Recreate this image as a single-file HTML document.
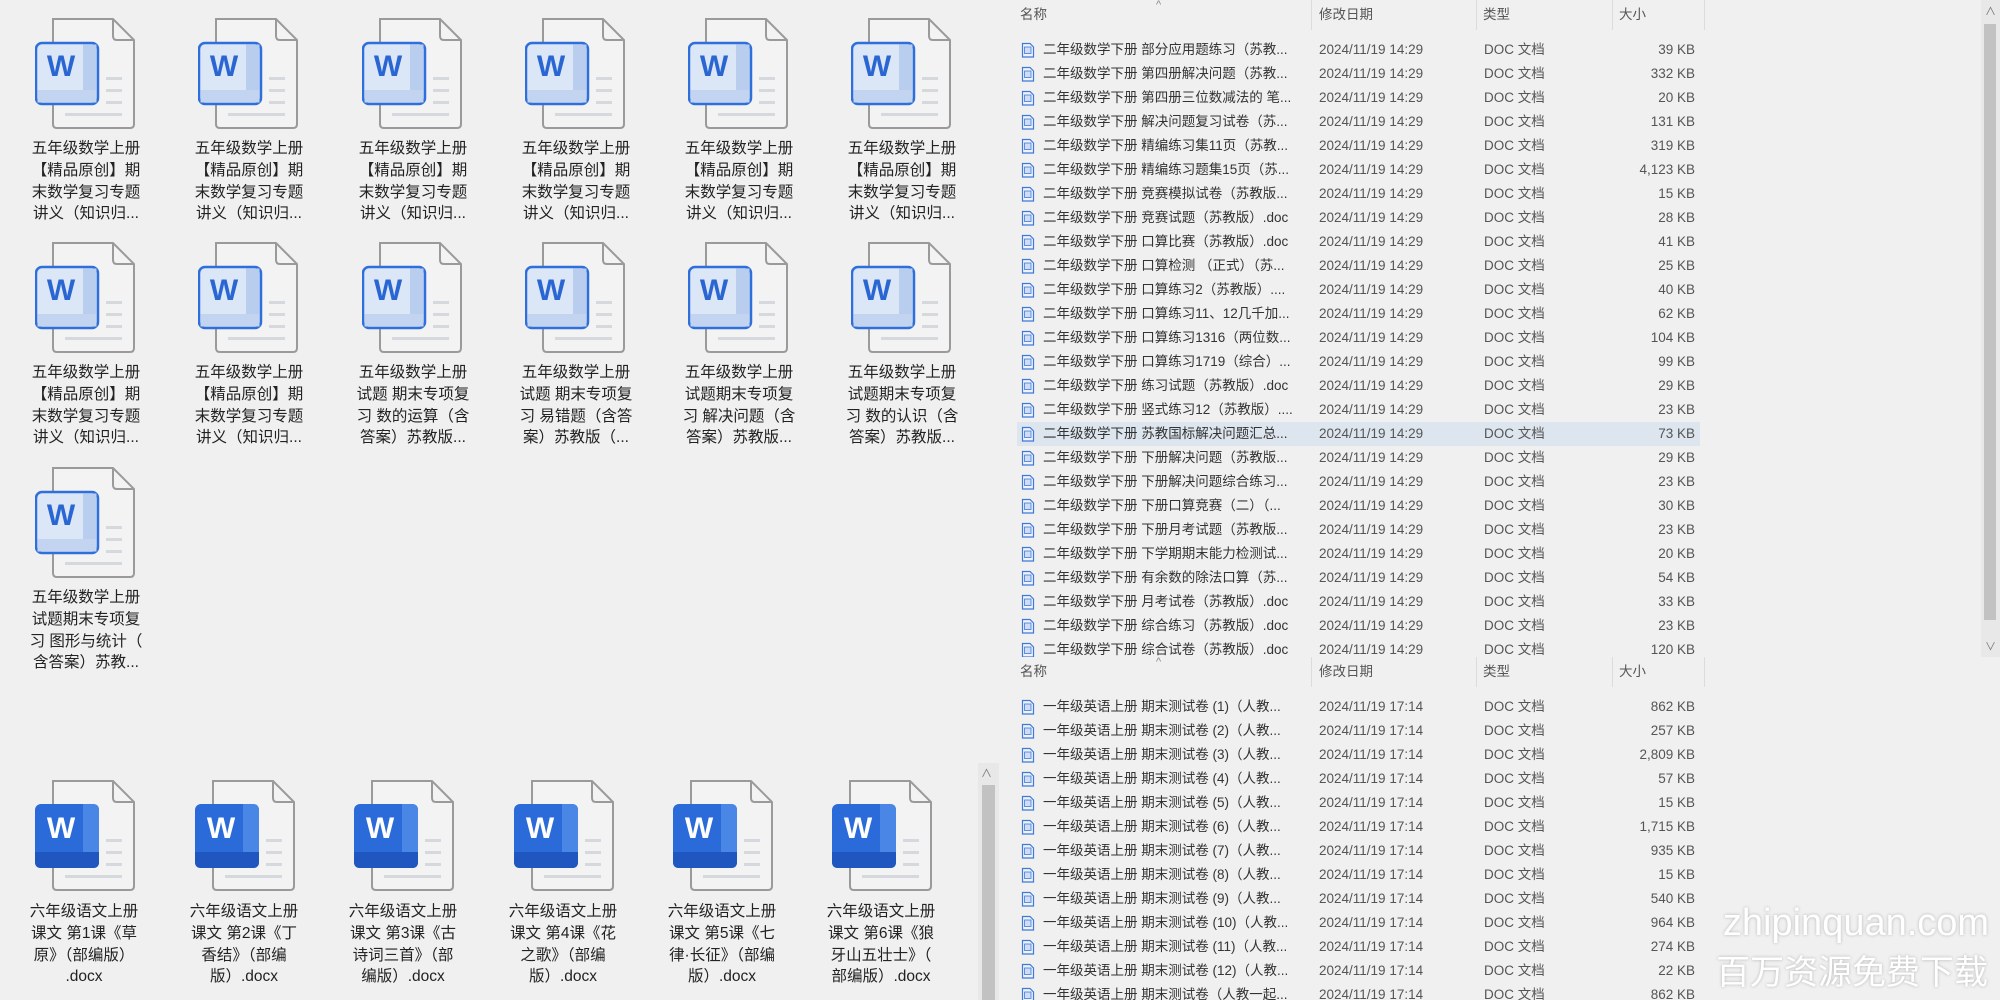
<!DOCTYPE html>
<html><head><meta charset="utf-8">
<style>
*{margin:0;padding:0;box-sizing:border-box}
body{width:2000px;height:1000px;background:#f0f0f0;position:relative;overflow:hidden;font-family:"Liberation Sans","Noto Sans CJK SC",sans-serif;color:#222}
.ic{position:absolute;width:100px;height:112px}
.lb{position:absolute;width:150px;text-align:center;font-size:15.5px;line-height:21.8px;color:#222}
.pane{position:absolute;left:1000px;width:981px;overflow:hidden}
.hd{position:absolute;top:0;height:30px;font-size:13.5px;color:#555}
.hd span{position:absolute;top:0;line-height:30px}
.sep{position:absolute;top:0;width:1px;height:30px;background:#dcdcdc}
.r{position:absolute;left:17px;width:683px;height:24px;line-height:24px;font-size:13.5px;color:#333;white-space:nowrap}
.r.sel{background:#dde5ee}
.r svg{position:absolute;left:4px;top:4px}
.r .n{position:absolute;left:26px;width:268px;overflow:hidden}
.r .d{position:absolute;left:302px;color:#555}
.r .t{position:absolute;left:467px;color:#555}
.r .s{position:absolute;right:5px;color:#555}
</style></head><body>

<svg width="0" height="0" style="position:absolute">
<defs>
<g id="pg">
<path d="M18 1 H78 L99 22 V106 Q99 110 95 110 H22 Q18 110 18 106 Z" fill="#f3f3f3" stroke="#9a9a9a" stroke-width="2"/>
<path d="M78 1 V18 Q78 22 82 22 H99" fill="none" stroke="#9a9a9a" stroke-width="2"/>
<rect x="71" y="59" width="16" height="3" fill="#d5d9de"/>
<rect x="71" y="71" width="16" height="3" fill="#d5d9de"/>
<rect x="71" y="83" width="16" height="3" fill="#d5d9de"/>
<rect x="30" y="95" width="57" height="3" fill="#d5d9de"/>
</g>
<g id="wl">
<use href="#pg"/>
<rect x="1" y="25" width="62" height="61" rx="6" fill="#dbe6f7" stroke="#2f6fdc" stroke-width="2.5"/>
<rect x="48" y="26.5" width="13.5" height="58" fill="#b9cdef"/>
<rect x="2.5" y="72" width="59" height="12.5" fill="#c3d4f0"/>
<text x="26" y="58" text-anchor="middle" font-family="Liberation Sans" font-weight="bold" font-size="30" fill="#2a66d2">W</text>
</g>
<g id="wd">
<use href="#pg"/>
<rect x="0" y="24" width="64" height="64" rx="6" fill="#2b6bd9"/>
<path d="M48 24 H58 Q64 24 64 30 V82 Q64 88 58 88 H48 Z" fill="#4a86e6"/>
<path d="M0 72 H64 V82 Q64 88 58 88 H6 Q0 88 0 82 Z" fill="#1f56bf"/>
<text x="26" y="58" text-anchor="middle" font-family="Liberation Sans" font-weight="bold" font-size="30" fill="#fff">W</text>
</g>
<g id="sm">
<path d="M1.5 1.5 H9 L12.5 5 V15 H1.5 Z" fill="#eef3fb" stroke="#3f7ad8" stroke-width="1.2"/>
<rect x="3.5" y="5" width="6.5" height="6.5" fill="#cfdcf3" stroke="#3f7ad8" stroke-width=".8"/>
</g>
</defs>
</svg>

<!-- Top-left grid -->
<svg class="ic" style="left:35px;top:18px" viewBox="0 0 100 112"><use href="#wl"/></svg>
<svg class="ic" style="left:198px;top:18px" viewBox="0 0 100 112"><use href="#wl"/></svg>
<svg class="ic" style="left:362px;top:18px" viewBox="0 0 100 112"><use href="#wl"/></svg>
<svg class="ic" style="left:525px;top:18px" viewBox="0 0 100 112"><use href="#wl"/></svg>
<svg class="ic" style="left:688px;top:18px" viewBox="0 0 100 112"><use href="#wl"/></svg>
<svg class="ic" style="left:851px;top:18px" viewBox="0 0 100 112"><use href="#wl"/></svg>

<div class="lb" style="left:11px;top:138px">五年级数学上册<br>【精品原创】期<br>末数学复习专题<br>讲义（知识归...</div>
<div class="lb" style="left:174px;top:138px">五年级数学上册<br>【精品原创】期<br>末数学复习专题<br>讲义（知识归...</div>
<div class="lb" style="left:338px;top:138px">五年级数学上册<br>【精品原创】期<br>末数学复习专题<br>讲义（知识归...</div>
<div class="lb" style="left:501px;top:138px">五年级数学上册<br>【精品原创】期<br>末数学复习专题<br>讲义（知识归...</div>
<div class="lb" style="left:664px;top:138px">五年级数学上册<br>【精品原创】期<br>末数学复习专题<br>讲义（知识归...</div>
<div class="lb" style="left:827px;top:138px">五年级数学上册<br>【精品原创】期<br>末数学复习专题<br>讲义（知识归...</div>

<svg class="ic" style="left:35px;top:242px" viewBox="0 0 100 112"><use href="#wl"/></svg>
<svg class="ic" style="left:198px;top:242px" viewBox="0 0 100 112"><use href="#wl"/></svg>
<svg class="ic" style="left:362px;top:242px" viewBox="0 0 100 112"><use href="#wl"/></svg>
<svg class="ic" style="left:525px;top:242px" viewBox="0 0 100 112"><use href="#wl"/></svg>
<svg class="ic" style="left:688px;top:242px" viewBox="0 0 100 112"><use href="#wl"/></svg>
<svg class="ic" style="left:851px;top:242px" viewBox="0 0 100 112"><use href="#wl"/></svg>

<div class="lb" style="left:11px;top:362px">五年级数学上册<br>【精品原创】期<br>末数学复习专题<br>讲义（知识归...</div>
<div class="lb" style="left:174px;top:362px">五年级数学上册<br>【精品原创】期<br>末数学复习专题<br>讲义（知识归...</div>
<div class="lb" style="left:338px;top:362px">五年级数学上册<br>试题 期末专项复<br>习 数的运算（含<br>答案）苏教版...</div>
<div class="lb" style="left:501px;top:362px">五年级数学上册<br>试题 期末专项复<br>习 易错题（含答<br>案）苏教版（...</div>
<div class="lb" style="left:664px;top:362px">五年级数学上册<br>试题期末专项复<br>习 解决问题（含<br>答案）苏教版...</div>
<div class="lb" style="left:827px;top:362px">五年级数学上册<br>试题期末专项复<br>习 数的认识（含<br>答案）苏教版...</div>

<svg class="ic" style="left:35px;top:467px" viewBox="0 0 100 112"><use href="#wl"/></svg>
<div class="lb" style="left:11px;top:587px">五年级数学上册<br>试题期末专项复<br>习 图形与统计（<br>含答案）苏教...</div>

<!-- Bottom-left row -->
<svg class="ic" style="left:35px;top:780px" viewBox="0 0 100 112"><use href="#wd"/></svg>
<svg class="ic" style="left:195px;top:780px" viewBox="0 0 100 112"><use href="#wd"/></svg>
<svg class="ic" style="left:354px;top:780px" viewBox="0 0 100 112"><use href="#wd"/></svg>
<svg class="ic" style="left:514px;top:780px" viewBox="0 0 100 112"><use href="#wd"/></svg>
<svg class="ic" style="left:673px;top:780px" viewBox="0 0 100 112"><use href="#wd"/></svg>
<svg class="ic" style="left:832px;top:780px" viewBox="0 0 100 112"><use href="#wd"/></svg>

<div class="lb" style="left:9px;top:901px">六年级语文上册<br>课文 第1课《草<br>原》（部编版）<br>.docx</div>
<div class="lb" style="left:169px;top:901px">六年级语文上册<br>课文 第2课《丁<br>香结》（部编<br>版）.docx</div>
<div class="lb" style="left:328px;top:901px">六年级语文上册<br>课文 第3课《古<br>诗词三首》（部<br>编版）.docx</div>
<div class="lb" style="left:488px;top:901px">六年级语文上册<br>课文 第4课《花<br>之歌》（部编<br>版）.docx</div>
<div class="lb" style="left:647px;top:901px">六年级语文上册<br>课文 第5课《七<br>律·长征》（部编<br>版）.docx</div>
<div class="lb" style="left:806px;top:901px">六年级语文上册<br>课文 第6课《狼<br>牙山五壮士》（<br>部编版）.docx</div>

<!-- middle scrollbar -->
<div style="position:absolute;left:978px;top:763px;width:21px;height:237px;background:#e8e8e8"></div>
<div style="position:absolute;left:982px;top:785px;width:13px;height:215px;background:#c2c2c2"></div>
<div style="position:absolute;left:981px;top:765px;font-size:11px;color:#777">∧</div>

<!-- top list pane -->
<div class="pane" style="top:0;height:657px">
<div class="hd" style="left:0;width:981px">
<span style="left:20px">名称</span><span style="left:156px;top:-10px;font-size:11px;color:#888">^</span>
<span style="left:319px">修改日期</span><span style="left:483px">类型</span><span style="left:619px">大小</span>
<div class="sep" style="left:311px"></div><div class="sep" style="left:476px"></div><div class="sep" style="left:612px"></div><div class="sep" style="left:704px"></div>
</div>
<div class="r" style="top:38px"><svg width="14" height="16"><use href="#sm"/></svg><span class="n">二年级数学下册 部分应用题练习（苏教...</span><span class="d">2024/11/19 14:29</span><span class="t">DOC 文档</span><span class="s">39 KB</span></div>
<div class="r" style="top:62px"><svg width="14" height="16"><use href="#sm"/></svg><span class="n">二年级数学下册 第四册解决问题（苏教...</span><span class="d">2024/11/19 14:29</span><span class="t">DOC 文档</span><span class="s">332 KB</span></div>
<div class="r" style="top:86px"><svg width="14" height="16"><use href="#sm"/></svg><span class="n">二年级数学下册 第四册三位数减法的 笔...</span><span class="d">2024/11/19 14:29</span><span class="t">DOC 文档</span><span class="s">20 KB</span></div>
<div class="r" style="top:110px"><svg width="14" height="16"><use href="#sm"/></svg><span class="n">二年级数学下册 解决问题复习试卷（苏...</span><span class="d">2024/11/19 14:29</span><span class="t">DOC 文档</span><span class="s">131 KB</span></div>
<div class="r" style="top:134px"><svg width="14" height="16"><use href="#sm"/></svg><span class="n">二年级数学下册 精编练习集11页（苏教...</span><span class="d">2024/11/19 14:29</span><span class="t">DOC 文档</span><span class="s">319 KB</span></div>
<div class="r" style="top:158px"><svg width="14" height="16"><use href="#sm"/></svg><span class="n">二年级数学下册 精编练习题集15页（苏...</span><span class="d">2024/11/19 14:29</span><span class="t">DOC 文档</span><span class="s">4,123 KB</span></div>
<div class="r" style="top:182px"><svg width="14" height="16"><use href="#sm"/></svg><span class="n">二年级数学下册 竞赛模拟试卷（苏教版...</span><span class="d">2024/11/19 14:29</span><span class="t">DOC 文档</span><span class="s">15 KB</span></div>
<div class="r" style="top:206px"><svg width="14" height="16"><use href="#sm"/></svg><span class="n">二年级数学下册 竞赛试题（苏教版）.doc</span><span class="d">2024/11/19 14:29</span><span class="t">DOC 文档</span><span class="s">28 KB</span></div>
<div class="r" style="top:230px"><svg width="14" height="16"><use href="#sm"/></svg><span class="n">二年级数学下册 口算比赛（苏教版）.doc</span><span class="d">2024/11/19 14:29</span><span class="t">DOC 文档</span><span class="s">41 KB</span></div>
<div class="r" style="top:254px"><svg width="14" height="16"><use href="#sm"/></svg><span class="n">二年级数学下册 口算检测 （正式）（苏...</span><span class="d">2024/11/19 14:29</span><span class="t">DOC 文档</span><span class="s">25 KB</span></div>
<div class="r" style="top:278px"><svg width="14" height="16"><use href="#sm"/></svg><span class="n">二年级数学下册 口算练习2（苏教版）....</span><span class="d">2024/11/19 14:29</span><span class="t">DOC 文档</span><span class="s">40 KB</span></div>
<div class="r" style="top:302px"><svg width="14" height="16"><use href="#sm"/></svg><span class="n">二年级数学下册 口算练习11、12几千加...</span><span class="d">2024/11/19 14:29</span><span class="t">DOC 文档</span><span class="s">62 KB</span></div>
<div class="r" style="top:326px"><svg width="14" height="16"><use href="#sm"/></svg><span class="n">二年级数学下册 口算练习1316（两位数...</span><span class="d">2024/11/19 14:29</span><span class="t">DOC 文档</span><span class="s">104 KB</span></div>
<div class="r" style="top:350px"><svg width="14" height="16"><use href="#sm"/></svg><span class="n">二年级数学下册 口算练习1719（综合）...</span><span class="d">2024/11/19 14:29</span><span class="t">DOC 文档</span><span class="s">99 KB</span></div>
<div class="r" style="top:374px"><svg width="14" height="16"><use href="#sm"/></svg><span class="n">二年级数学下册 练习试题（苏教版）.doc</span><span class="d">2024/11/19 14:29</span><span class="t">DOC 文档</span><span class="s">29 KB</span></div>
<div class="r" style="top:398px"><svg width="14" height="16"><use href="#sm"/></svg><span class="n">二年级数学下册 竖式练习12（苏教版）....</span><span class="d">2024/11/19 14:29</span><span class="t">DOC 文档</span><span class="s">23 KB</span></div>
<div class="r sel" style="top:422px"><svg width="14" height="16"><use href="#sm"/></svg><span class="n">二年级数学下册 苏教国标解决问题汇总...</span><span class="d">2024/11/19 14:29</span><span class="t">DOC 文档</span><span class="s">73 KB</span></div>
<div class="r" style="top:446px"><svg width="14" height="16"><use href="#sm"/></svg><span class="n">二年级数学下册 下册解决问题（苏教版...</span><span class="d">2024/11/19 14:29</span><span class="t">DOC 文档</span><span class="s">29 KB</span></div>
<div class="r" style="top:470px"><svg width="14" height="16"><use href="#sm"/></svg><span class="n">二年级数学下册 下册解决问题综合练习...</span><span class="d">2024/11/19 14:29</span><span class="t">DOC 文档</span><span class="s">23 KB</span></div>
<div class="r" style="top:494px"><svg width="14" height="16"><use href="#sm"/></svg><span class="n">二年级数学下册 下册口算竞赛（二）（...</span><span class="d">2024/11/19 14:29</span><span class="t">DOC 文档</span><span class="s">30 KB</span></div>
<div class="r" style="top:518px"><svg width="14" height="16"><use href="#sm"/></svg><span class="n">二年级数学下册 下册月考试题（苏教版...</span><span class="d">2024/11/19 14:29</span><span class="t">DOC 文档</span><span class="s">23 KB</span></div>
<div class="r" style="top:542px"><svg width="14" height="16"><use href="#sm"/></svg><span class="n">二年级数学下册 下学期期末能力检测试...</span><span class="d">2024/11/19 14:29</span><span class="t">DOC 文档</span><span class="s">20 KB</span></div>
<div class="r" style="top:566px"><svg width="14" height="16"><use href="#sm"/></svg><span class="n">二年级数学下册 有余数的除法口算（苏...</span><span class="d">2024/11/19 14:29</span><span class="t">DOC 文档</span><span class="s">54 KB</span></div>
<div class="r" style="top:590px"><svg width="14" height="16"><use href="#sm"/></svg><span class="n">二年级数学下册 月考试卷（苏教版）.doc</span><span class="d">2024/11/19 14:29</span><span class="t">DOC 文档</span><span class="s">33 KB</span></div>
<div class="r" style="top:614px"><svg width="14" height="16"><use href="#sm"/></svg><span class="n">二年级数学下册 综合练习（苏教版）.doc</span><span class="d">2024/11/19 14:29</span><span class="t">DOC 文档</span><span class="s">23 KB</span></div>
<div class="r" style="top:638px"><svg width="14" height="16"><use href="#sm"/></svg><span class="n">二年级数学下册 综合试卷（苏教版）.doc</span><span class="d">2024/11/19 14:29</span><span class="t">DOC 文档</span><span class="s">120 KB</span></div>
</div>

<!-- right scrollbar -->
<div style="position:absolute;left:1981px;top:0;width:19px;height:657px;background:#e8e8e8"></div>
<div style="position:absolute;left:1984px;top:24px;width:12px;height:596px;background:#c2c2c2"></div>
<div style="position:absolute;left:1985px;top:3px;font-size:11px;color:#777">∧</div>
<div style="position:absolute;left:1985px;top:638px;font-size:11px;color:#777">∨</div>

<!-- bottom list pane -->
<div class="pane" style="top:657px;height:343px">
<div class="hd" style="left:0;width:981px">
<span style="left:20px">名称</span><span style="left:156px;top:-10px;font-size:11px;color:#888">^</span>
<span style="left:319px">修改日期</span><span style="left:483px">类型</span><span style="left:619px">大小</span>
<div class="sep" style="left:311px"></div><div class="sep" style="left:476px"></div><div class="sep" style="left:612px"></div><div class="sep" style="left:704px"></div>
</div>
<div class="r" style="top:38px"><svg width="14" height="16"><use href="#sm"/></svg><span class="n">一年级英语上册 期末测试卷 (1)（人教...</span><span class="d">2024/11/19 17:14</span><span class="t">DOC 文档</span><span class="s">862 KB</span></div>
<div class="r" style="top:62px"><svg width="14" height="16"><use href="#sm"/></svg><span class="n">一年级英语上册 期末测试卷 (2)（人教...</span><span class="d">2024/11/19 17:14</span><span class="t">DOC 文档</span><span class="s">257 KB</span></div>
<div class="r" style="top:86px"><svg width="14" height="16"><use href="#sm"/></svg><span class="n">一年级英语上册 期末测试卷 (3)（人教...</span><span class="d">2024/11/19 17:14</span><span class="t">DOC 文档</span><span class="s">2,809 KB</span></div>
<div class="r" style="top:110px"><svg width="14" height="16"><use href="#sm"/></svg><span class="n">一年级英语上册 期末测试卷 (4)（人教...</span><span class="d">2024/11/19 17:14</span><span class="t">DOC 文档</span><span class="s">57 KB</span></div>
<div class="r" style="top:134px"><svg width="14" height="16"><use href="#sm"/></svg><span class="n">一年级英语上册 期末测试卷 (5)（人教...</span><span class="d">2024/11/19 17:14</span><span class="t">DOC 文档</span><span class="s">15 KB</span></div>
<div class="r" style="top:158px"><svg width="14" height="16"><use href="#sm"/></svg><span class="n">一年级英语上册 期末测试卷 (6)（人教...</span><span class="d">2024/11/19 17:14</span><span class="t">DOC 文档</span><span class="s">1,715 KB</span></div>
<div class="r" style="top:182px"><svg width="14" height="16"><use href="#sm"/></svg><span class="n">一年级英语上册 期末测试卷 (7)（人教...</span><span class="d">2024/11/19 17:14</span><span class="t">DOC 文档</span><span class="s">935 KB</span></div>
<div class="r" style="top:206px"><svg width="14" height="16"><use href="#sm"/></svg><span class="n">一年级英语上册 期末测试卷 (8)（人教...</span><span class="d">2024/11/19 17:14</span><span class="t">DOC 文档</span><span class="s">15 KB</span></div>
<div class="r" style="top:230px"><svg width="14" height="16"><use href="#sm"/></svg><span class="n">一年级英语上册 期末测试卷 (9)（人教...</span><span class="d">2024/11/19 17:14</span><span class="t">DOC 文档</span><span class="s">540 KB</span></div>
<div class="r" style="top:254px"><svg width="14" height="16"><use href="#sm"/></svg><span class="n">一年级英语上册 期末测试卷 (10)（人教...</span><span class="d">2024/11/19 17:14</span><span class="t">DOC 文档</span><span class="s">964 KB</span></div>
<div class="r" style="top:278px"><svg width="14" height="16"><use href="#sm"/></svg><span class="n">一年级英语上册 期末测试卷 (11)（人教...</span><span class="d">2024/11/19 17:14</span><span class="t">DOC 文档</span><span class="s">274 KB</span></div>
<div class="r" style="top:302px"><svg width="14" height="16"><use href="#sm"/></svg><span class="n">一年级英语上册 期末测试卷 (12)（人教...</span><span class="d">2024/11/19 17:14</span><span class="t">DOC 文档</span><span class="s">22 KB</span></div>
<div class="r" style="top:326px"><svg width="14" height="16"><use href="#sm"/></svg><span class="n">一年级英语上册 期末测试卷（人教一起...</span><span class="d">2024/11/19 17:14</span><span class="t">DOC 文档</span><span class="s">862 KB</span></div>
</div>

<!-- watermark -->
<div style="position:absolute;left:1716px;top:900px;width:280px;text-align:center;font-size:38px;color:#fff;text-shadow:0 0 3px rgba(0,0,0,.25);line-height:46px;font-family:'Liberation Sans',sans-serif">zhipinquan.com</div>
<div style="position:absolute;left:1706px;top:950px;width:292px;text-align:center;font-size:34px;color:#fff;text-shadow:0 0 3px rgba(0,0,0,.25);line-height:46px;font-family:'Liberation Sans','Noto Sans CJK SC',sans-serif">百万资源免费下载</div>
</body></html>
